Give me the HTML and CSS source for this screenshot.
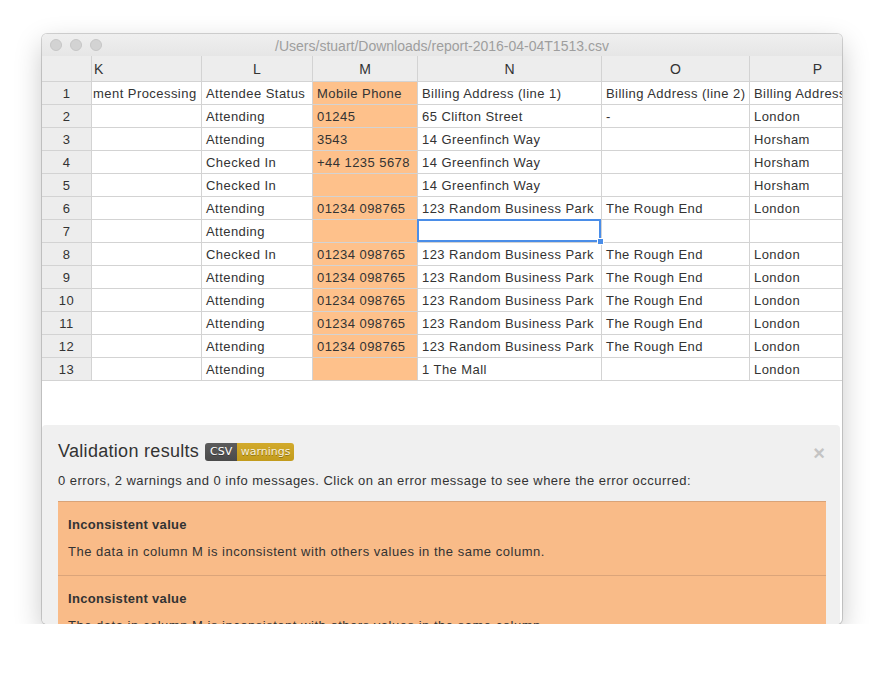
FILE: index.html
```html
<!DOCTYPE html>
<html>
<head>
<meta charset="utf-8">
<link rel="stylesheet" href="styles.css">
</head>
<body>
<div class="window">
  <div class="titlebar">
    <div class="lights"><span></span><span></span><span></span></div>
    <div class="title">/Users/stuart/Downloads/report-2016-04-04T1513.csv</div>
    <div></div>
  </div>
  <div class="sheet">
    <div class="row head">
      <div class="c rn"></div><div class="c hk">K</div><div class="c">L</div><div class="c">M</div><div class="c">N</div><div class="c">O</div><div class="c">P</div>
    </div>
    <div class="row"><div class="c rn">1</div><div class="c cut">ment Processing</div><div class="c">Attendee Status</div><div class="c m">Mobile Phone</div><div class="c">Billing Address (line 1)</div><div class="c">Billing Address (line 2)</div><div class="c">Billing Address (line 3)</div></div>
    <div class="row"><div class="c rn">2</div><div class="c"></div><div class="c">Attending</div><div class="c m">01245</div><div class="c">65 Clifton Street</div><div class="c">-</div><div class="c">London</div></div>
    <div class="row"><div class="c rn">3</div><div class="c"></div><div class="c">Attending</div><div class="c m">3543</div><div class="c">14 Greenfinch Way</div><div class="c"></div><div class="c">Horsham</div></div>
    <div class="row"><div class="c rn">4</div><div class="c"></div><div class="c">Checked In</div><div class="c m">+44 1235 5678</div><div class="c">14 Greenfinch Way</div><div class="c"></div><div class="c">Horsham</div></div>
    <div class="row"><div class="c rn">5</div><div class="c"></div><div class="c">Checked In</div><div class="c m"></div><div class="c">14 Greenfinch Way</div><div class="c"></div><div class="c">Horsham</div></div>
    <div class="row"><div class="c rn">6</div><div class="c"></div><div class="c">Attending</div><div class="c m">01234 098765</div><div class="c">123 Random Business Park</div><div class="c">The Rough End</div><div class="c">London</div></div>
    <div class="row"><div class="c rn">7</div><div class="c"></div><div class="c">Attending</div><div class="c m"></div><div class="c sel"></div><div class="c"></div><div class="c"></div></div>
    <div class="row"><div class="c rn">8</div><div class="c"></div><div class="c">Checked In</div><div class="c m">01234 098765</div><div class="c">123 Random Business Park</div><div class="c">The Rough End</div><div class="c">London</div></div>
    <div class="row"><div class="c rn">9</div><div class="c"></div><div class="c">Attending</div><div class="c m">01234 098765</div><div class="c">123 Random Business Park</div><div class="c">The Rough End</div><div class="c">London</div></div>
    <div class="row"><div class="c rn">10</div><div class="c"></div><div class="c">Attending</div><div class="c m">01234 098765</div><div class="c">123 Random Business Park</div><div class="c">The Rough End</div><div class="c">London</div></div>
    <div class="row"><div class="c rn">11</div><div class="c"></div><div class="c">Attending</div><div class="c m">01234 098765</div><div class="c">123 Random Business Park</div><div class="c">The Rough End</div><div class="c">London</div></div>
    <div class="row"><div class="c rn">12</div><div class="c"></div><div class="c">Attending</div><div class="c m">01234 098765</div><div class="c">123 Random Business Park</div><div class="c">The Rough End</div><div class="c">London</div></div>
    <div class="row"><div class="c rn">13</div><div class="c"></div><div class="c">Attending</div><div class="c m"></div><div class="c">1 The Mall</div><div class="c"></div><div class="c">London</div></div>
  </div>
  <div class="panel">
    <div class="panel-head">
      <h2>Validation results</h2>
      <span class="badge"><span class="b-l">CSV</span><span class="b-r">warnings</span></span>
      <span class="close">×</span>
    </div>
    <p class="summary">0 errors, 2 warnings and 0 info messages. Click on an error message to see where the error occurred:</p>
    <div class="errors">
      <div class="err">
        <div class="err-title">Inconsistent value</div>
        <div class="err-body">The data in column M is inconsistent with others values in the same column.</div>
      </div>
      <div class="err">
        <div class="err-title">Inconsistent value</div>
        <div class="err-body">The data in column M is inconsistent with others values in the same column.</div>
      </div>
    </div>
  </div>
</div>
</body>
</html>
```
FILE: styles.css
```css
html, body {
  margin: 0;
  padding: 0;
  background: #ffffff;
}
body {
  font-family: "Liberation Sans", Arial, sans-serif;
  color: #333;
}
.window {
  margin: 34px 0 0 42px;
  width: 800px;
  height: 590px;
  border-radius: 5px;
  overflow: hidden;
  background: #fff;
  display: flex;
  flex-direction: column;
  box-shadow: 0 0 0 1px rgba(0,0,0,0.16), 0 10px 28px rgba(0,0,0,0.22);
}
.titlebar {
  height: 22px;
  flex: none;
  background: linear-gradient(#efefef, #e6e6e6);
  display: grid;
  grid-template-columns: 1fr auto 1fr;
  align-items: center;
}
.lights {
  display: flex;
  gap: 8px;
  padding-left: 8px;
}
.lights span {
  width: 12px;
  height: 12px;
  box-sizing: border-box;
  border-radius: 50%;
  background: #d3d3d3;
  border: 1px solid #c6c6c6;
}
.title {
  font-size: 14px;
  color: #9e9e9e;
  padding-top: 1px;
}
.sheet {
  flex: none;
  font-size: 13px;
  letter-spacing: 0.45px;
  color: #333;
}
.row {
  display: grid;
  grid-template-columns: 50px 110px 111px 105px 184px 148px 136px;
  height: 23px;
}
.row.head {
  height: 26px;
}
.c {
  box-sizing: border-box;
  border-right: 1px solid #d3d3d3;
  border-bottom: 1px solid #d3d3d3;
  padding: 1px 4px 0;
  line-height: 22px;
  white-space: nowrap;
  overflow: hidden;
  background: #fff;
}
.head .c {
  background: #ededed;
  text-align: center;
  line-height: 25px;
  font-size: 14px;
  letter-spacing: 0;
}
.head .c.hk {
  text-align: left;
  padding-left: 2px;
}
.c.rn {
  background: #ededed;
  text-align: center;
}
.c.cut {
  padding-left: 1px;
}
.c.m {
  background: #fec18b;
}
.c.sel {
  position: relative;
  overflow: visible;
}
.c.sel::after {
  content: "";
  position: absolute;
  left: -1px;
  top: -1px;
  right: 0;
  bottom: 0;
  border: 2px solid #4a8de8;
}
.c.sel::before {
  content: "";
  position: absolute;
  right: -3px;
  bottom: -3px;
  width: 5px;
  height: 5px;
  background: #4a8de8;
  border: 1px solid #fff;
  z-index: 2;
}
.panel {
  flex: 1;
  min-height: 0;
  overflow: hidden;
  margin: 44px 2px 0 0;
  border-radius: 4px 4px 0 0;
  background: #f0f0f0;
  padding: 15px 14px 0 16px;
}
.panel-head {
  display: flex;
  align-items: center;
  height: 22px;
}
.panel-head h2 {
  margin: 0;
  font-size: 18px;
  font-weight: 500;
  letter-spacing: 0.3px;
  color: #333;
}
.badge {
  display: flex;
  margin-left: 6px;
  margin-top: 1px;
  height: 18px;
  border-radius: 3px;
  overflow: hidden;
  font-family: "DejaVu Sans", Verdana, sans-serif;
  font-size: 11px;
  line-height: 18px;
  color: #fff;
  text-shadow: 0 1px 0 rgba(1,1,1,0.3);
}
.b-l {
  width: 32px;
  text-align: center;
  background: linear-gradient(#5c5c5c, #4a4a4a);
}
.b-r {
  width: 57px;
  text-align: center;
  background: linear-gradient(#d2aa2c, #c29b1c);
  color: #f6f0dc;
}
.close {
  margin-left: auto;
  margin-right: 1px;
  margin-top: 3px;
  font-size: 20px;
  font-weight: bold;
  color: #c4c4c4;
  line-height: 22px;
}
.summary {
  margin: 10px 0 0;
  font-size: 13px;
  line-height: 18px;
  letter-spacing: 0.47px;
  color: #333;
}
.errors {
  margin-top: 11px;
  background: #f9bb88;
  border-top: 1px solid #d9a378;
}
.err {
  padding: 14px 10px 14px;
  border-bottom: 1px solid #dba47a;
}
.err-title {
  font-size: 13px;
  font-weight: bold;
  line-height: 18px;
  letter-spacing: 0.3px;
  color: #333;
}
.err-body {
  margin-top: 9px;
  font-size: 13px;
  line-height: 18px;
  letter-spacing: 0.52px;
  color: #333;
}
```
